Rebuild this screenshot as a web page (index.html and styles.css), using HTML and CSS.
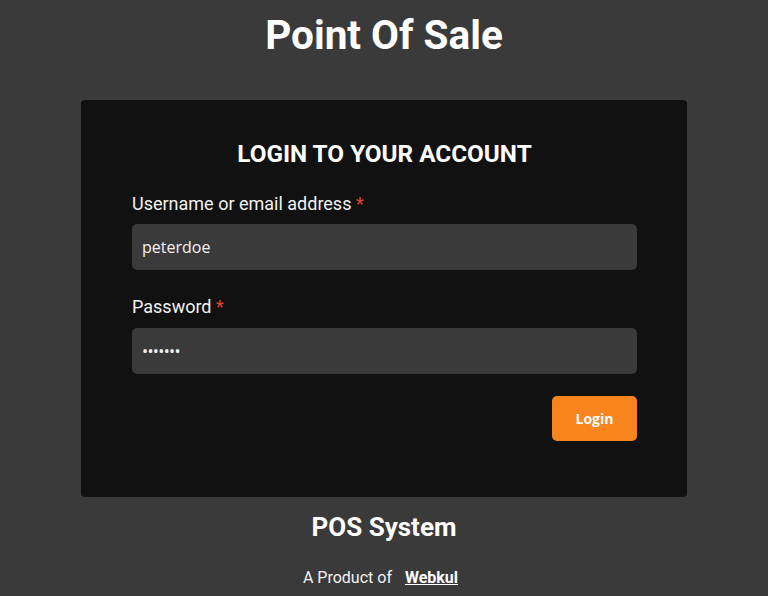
FILE: index.html
```html
<!DOCTYPE html>
<html lang="en">
<head>
<meta charset="utf-8">
<title>Point Of Sale</title>
<link rel="stylesheet" href="styles.css">
</head>
<body>
<div class="page">
  <h1 class="title">Point Of Sale</h1>
  <form class="card">
    <h2 class="card-title">LOGIN TO YOUR ACCOUNT</h2>
    <div class="field">
      <label class="label" for="user">Username or email address <span class="req">*</span></label>
      <input class="input" id="user" type="text" value="peterdoe">
    </div>
    <div class="field">
      <label class="label" for="pass">Password <span class="req">*</span></label>
      <input class="input input-pass" id="pass" type="password" value="1234567">
    </div>
    <div class="actions">
      <button class="btn" type="button">Login</button>
    </div>
  </form>
  <div class="footer">
    <div class="brand">POS System</div>
    <div class="credit">A Product of <a class="credit-link" href="#">Webkul</a></div>
  </div>
</div>
</body>
</html>
```

FILE: styles.css
```css
* { box-sizing: border-box; }
html, body { margin: 0; padding: 0; }
body {
  background: #3b3a3b;
  font-family: Roboto, "Liberation Sans", sans-serif;
  color: #ffffff;
  height: 596px;
  overflow: hidden;
}
.page {
  display: flex;
  flex-direction: column;
  align-items: center;
  padding-top: 11px;
}
.title {
  margin: 0;
  font-size: 40.5px;
  line-height: 48px;
  font-weight: 700;
  color: #ffffff;
}
.card {
  margin-top: 41px;
  width: 606px;
  background: #111111;
  border-radius: 4px;
  padding: 40px 50px 56px 51px;
  display: flex;
  flex-direction: column;
}
.card-title {
  margin: 0 0 25px;
  text-align: center;
  font-size: 24.3px;
  line-height: 28px;
  font-weight: 700;
  color: #ffffff;
}
.field {
  display: flex;
  flex-direction: column;
  gap: 9px;
  margin-bottom: 26px;
}
.field + .field { gap: 10px; margin-bottom: 22px; }
.label {
  font-size: 18px;
  line-height: 22px;
  color: #f2f2f2;
}
.req { color: #e8452c; }
.input {
  height: 46px;
  border: none;
  outline: none;
  border-radius: 5px;
  background: #3b3a3b;
  color: #f2f2f2;
  font-family: "Open Sans", sans-serif;
  font-size: 16px;
  padding: 0 10px;
}
.input-pass { letter-spacing: -0.6px; }
.actions {
  display: flex;
  justify-content: flex-end;
}
.btn {
  width: 85px;
  height: 45px;
  border: none;
  border-radius: 5px;
  background: #f7841c;
  color: #ffffff;
  font-family: "Open Sans", sans-serif;
  font-weight: 700;
  font-size: 14px;
  cursor: pointer;
}
.footer {
  margin-top: 16px;
  display: flex;
  flex-direction: column;
  align-items: center;
}
.brand {
  font-size: 26px;
  line-height: 28px;
  font-weight: 700;
}
.credit {
  margin-top: 27px;
  padding-right: 7px;
  font-size: 16px;
  line-height: 20px;
  color: #f2f2f2;
}
.credit-link {
  margin-left: 9px;
  color: #ffffff;
  font-weight: 700;
  text-decoration: underline;
}
```
